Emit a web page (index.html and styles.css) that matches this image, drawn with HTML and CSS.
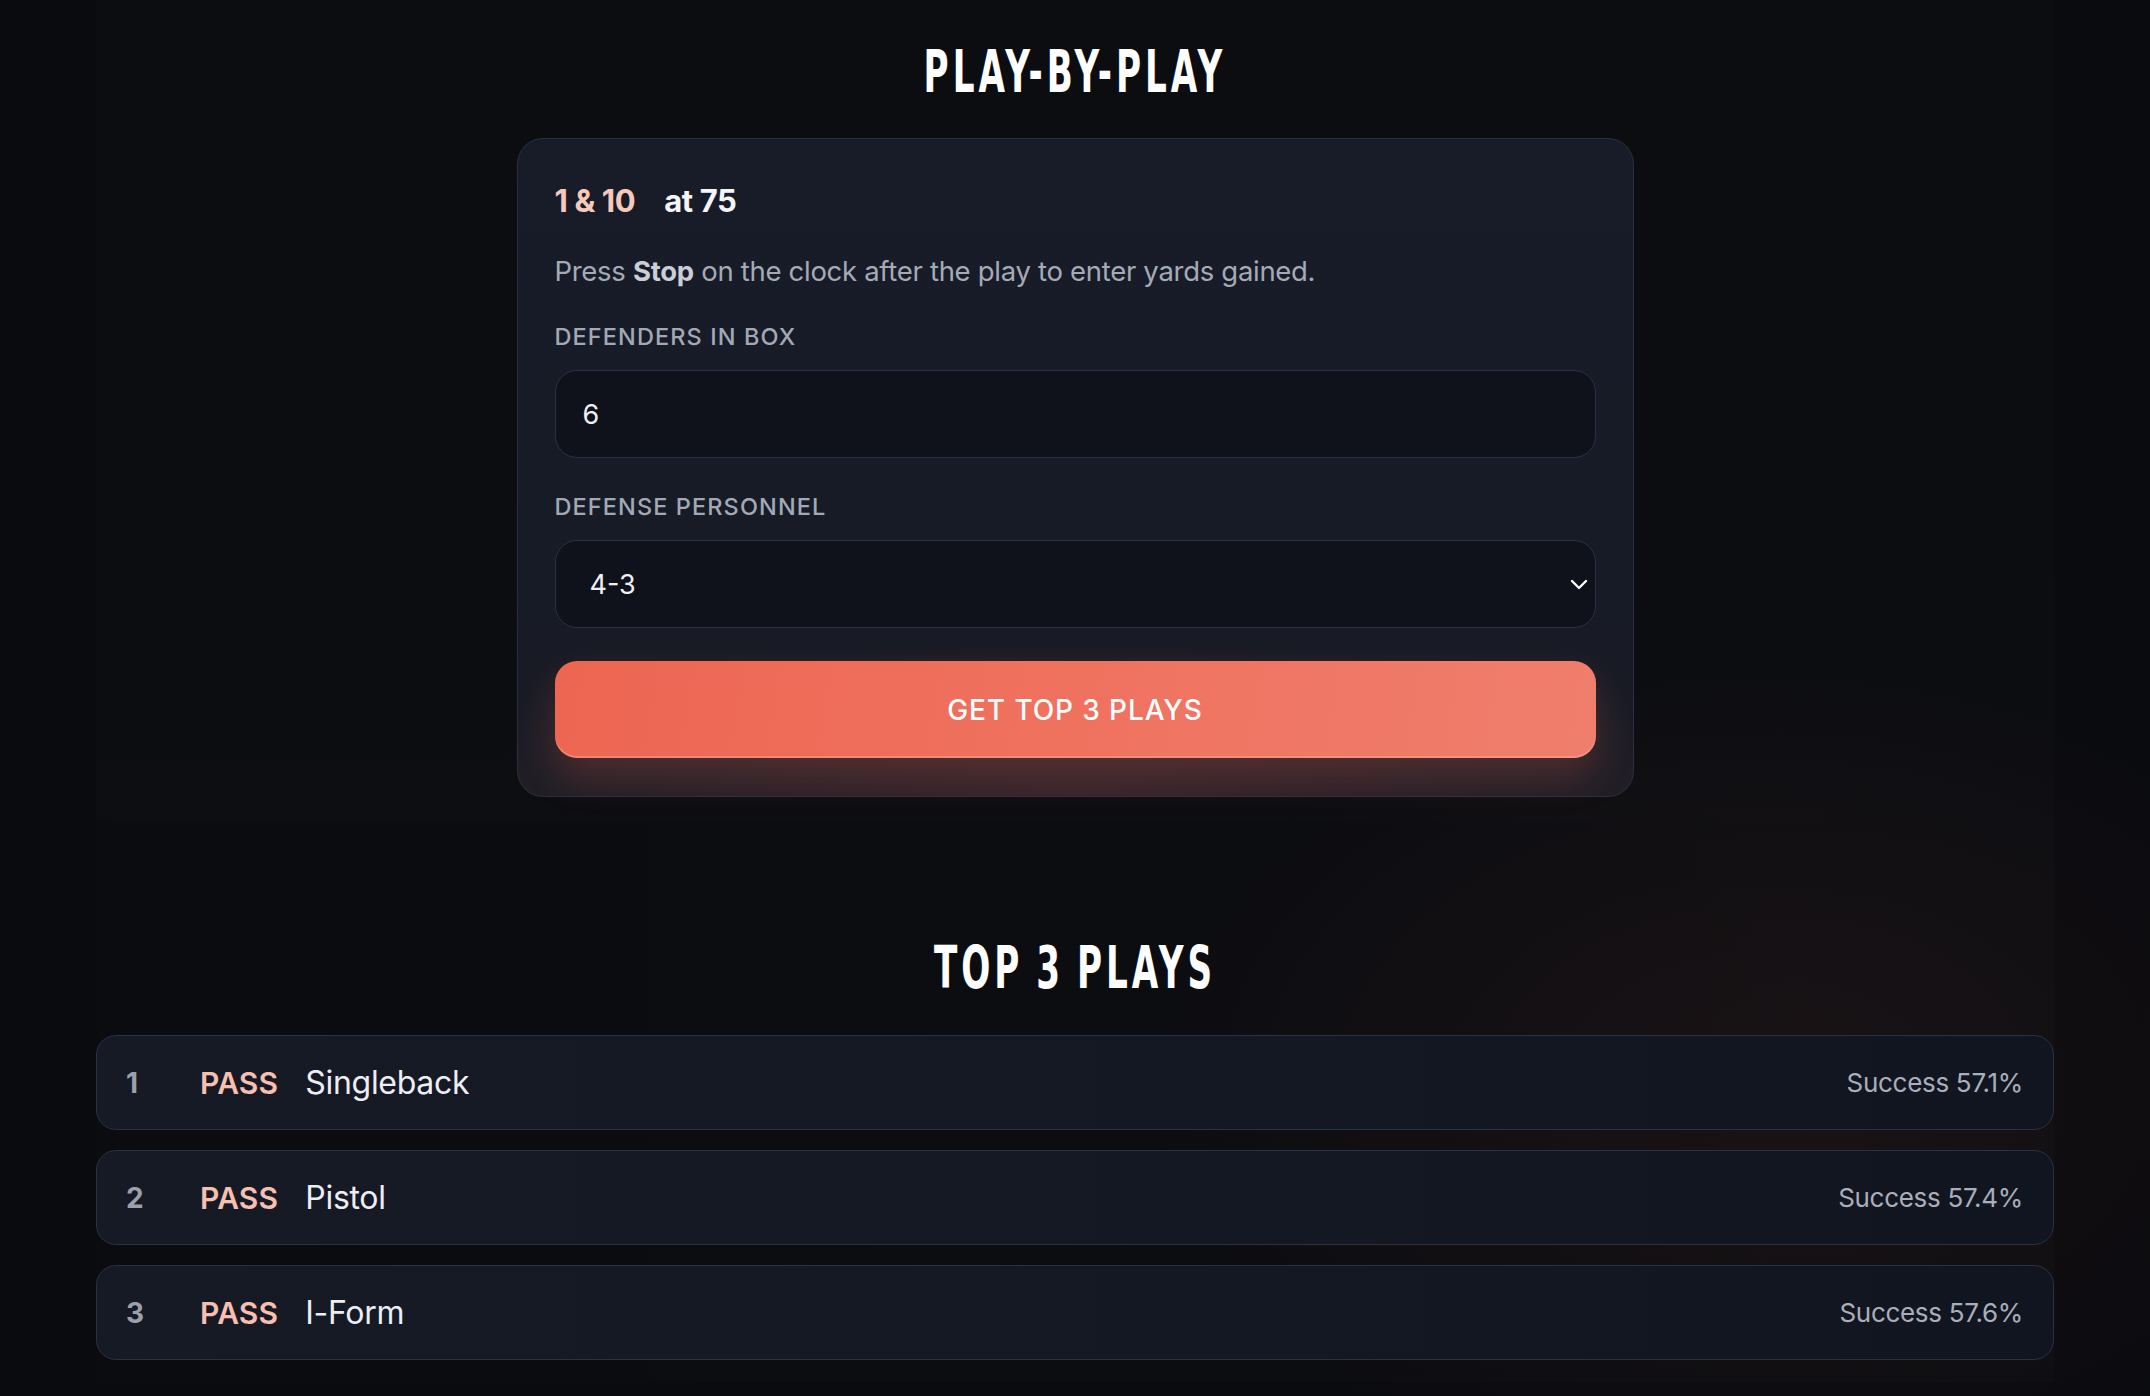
FILE: index.html
```html
<!DOCTYPE html>
<html lang="en">
<head>
<meta charset="utf-8">
<title>Play-by-Play</title>
<link rel="stylesheet" href="styles.css">
</head>
<body>
<div class="page">
  <section class="hero">
    <h1 class="display"><span class="display-text">PLAY-BY-PLAY</span></h1>
    <div class="card">
      <div class="down">
        <span class="down-dist">1 &amp; 10</span>
        <span class="down-spot">at 75</span>
      </div>
      <p class="hint">Press <strong>Stop</strong> on the clock after the play to enter yards gained.</p>
      <label class="label" for="box">DEFENDERS IN BOX</label>
      <input class="field" id="box" type="text" value="6">
      <label class="label label-second" for="pers">DEFENSE PERSONNEL</label>
      <div class="select-wrap">
        <select class="field select" id="pers">
          <option>4-3</option>
          <option>3-4</option>
          <option>Nickel</option>
          <option>Dime</option>
        </select>
        <svg class="chev" width="18" height="11" viewBox="0 0 18 11" aria-hidden="true"><path d="M2 2 L9 9 L16 2" fill="none" stroke="#ffffff" stroke-width="2.4" stroke-linecap="round" stroke-linejoin="round"/></svg>
      </div>
      <button class="cta" type="button">GET TOP 3 PLAYS</button>
    </div>
  </section>

  <section class="results">
    <h2 class="display"><span class="display-text">TOP 3 PLAYS</span></h2>
    <ol class="plays">
      <li class="play">
        <span class="rank">1</span>
        <span class="type">PASS</span>
        <span class="form">Singleback</span>
        <span class="rate">Success 57.1%</span>
      </li>
      <li class="play">
        <span class="rank">2</span>
        <span class="type">PASS</span>
        <span class="form">Pistol</span>
        <span class="rate">Success 57.4%</span>
      </li>
      <li class="play">
        <span class="rank">3</span>
        <span class="type">PASS</span>
        <span class="form">I-Form</span>
        <span class="rate">Success 57.6%</span>
      </li>
    </ol>
  </section>
</div>
</body>
</html>
```

FILE: styles.css
```css
* { box-sizing: border-box; }

html, body {
  margin: 0;
  padding: 0;
}

body {
  min-height: 1396px;
  background:
    radial-gradient(ellipse 900px 600px at 82% 78%, rgba(110, 48, 40, 0.13), rgba(110, 48, 40, 0) 70%),
    #0a0b0f;
  font-family: Inter, "Noto Sans", sans-serif;
  color: #e9ebf1;
}

.page {
  width: 1958px;
  margin: 0 auto;
}

.hero {
  padding: 42px 0 23px;
  display: flex;
  flex-direction: column;
  align-items: center;
  background: linear-gradient(180deg, rgba(255,255,255,0.006), rgba(255,255,255,0.012));
}

.display {
  margin: 0;
  height: 60px;
  line-height: 60px;
  text-align: center;
  font-family: "Liberation Sans Narrow", "DejaVu Sans Condensed", sans-serif;
  font-weight: 700;
  font-size: 38px;
  letter-spacing: 4px;
  word-spacing: -3px;
  color: #ffffff;
}

.display-text {
  display: inline-block;
  transform: scaleY(1.55);
}

.hero .display {
  margin-bottom: 36px;
}

.card {
  width: 1117px;
  padding: 40px 37px 38px;
  border: 1px solid #2a3040;
  border-radius: 26px;
  background:
    radial-gradient(ellipse 700px 150px at 50% 100%, rgba(150, 70, 60, 0.2), rgba(150, 70, 60, 0) 100%),
    linear-gradient(180deg, #181c28 0%, #171b26 70%, #1b1c25 100%);
  display: flex;
  flex-direction: column;
}

.down {
  height: 44px;
  line-height: 44px;
  font-size: 31px;
  font-weight: 700;
  letter-spacing: -0.4px;
  display: flex;
  gap: 29px;
}

.down-dist { color: #f6c9bb; }
.down-spot { color: #f4f5f8; }

.hint {
  margin: 30px 0 0;
  height: 36px;
  line-height: 36px;
  font-size: 27.5px;
  font-weight: 400;
  letter-spacing: -0.3px;
  color: #a4abb7;
}

.hint strong {
  font-weight: 700;
  color: #c9ced8;
}

.label {
  display: block;
  margin-top: 33px;
  height: 30px;
  line-height: 30px;
  font-size: 23.5px;
  font-weight: 500;
  letter-spacing: 1.1px;
  color: #a2a9b6;
}

.label-second {
  margin-top: 34px;
}

.field {
  display: block;
  width: 100%;
  height: 88px;
  margin-top: 18px;
  padding: 0 27px;
  border: 1.5px solid #2b3142;
  border-radius: 22px;
  background: #0f121b;
  color: #eef0f4;
  font-family: Inter, "Noto Sans", sans-serif;
  font-size: 27px;
  outline: none;
}

.select-wrap {
  position: relative;
  margin-top: 18px;
}

.select {
  margin-top: 0;
  padding-left: 34px;
  appearance: none;
  -webkit-appearance: none;
}

.chev {
  position: absolute;
  right: 8px;
  top: 39px;
}

.cta {
  margin-top: 33px;
  height: 97px;
  width: 100%;
  border: 0;
  border-radius: 22px;
  background: linear-gradient(100deg, #ed6652 0%, #ef725f 50%, #f07e6d 100%);
  box-shadow: inset 0 -2px 0 rgba(255, 170, 150, 0.45), 0 18px 38px rgba(236, 100, 80, 0.22);
  color: #ffffff;
  font-family: Inter, "Noto Sans", sans-serif;
  font-size: 28px;
  font-weight: 500;
  letter-spacing: 0.9px;
  cursor: pointer;
}

.results {
  padding: 118px 0 22px;
  background: linear-gradient(90deg, rgba(255,255,255,0.004), rgba(255,255,255,0.01));
}

.results .display {
  margin-bottom: 37px;
}

.plays {
  list-style: none;
  margin: 0;
  padding: 0;
  display: flex;
  flex-direction: column;
  gap: 20px;
}

.play {
  height: 95px;
  padding: 0 30px 0 29px;
  border: 1.5px solid #2a3142;
  border-radius: 20px;
  background: linear-gradient(90deg, #161a25 0%, #131823 60%, #111520 100%);
  display: flex;
  align-items: center;
}

.rank {
  width: 74px;
  font-size: 28px;
  font-weight: 700;
  color: #9aa1ad;
}

.type {
  font-size: 30px;
  font-weight: 600;
  color: #f6bfb0;
  letter-spacing: 0.2px;
}

.form {
  margin-left: 27px;
  font-size: 32px;
  font-weight: 400;
  color: #eceef3;
  letter-spacing: -0.3px;
}

.rate {
  margin-left: auto;
  font-size: 26px;
  font-weight: 400;
  color: #a8aebb;
  letter-spacing: -0.3px;
}
```
